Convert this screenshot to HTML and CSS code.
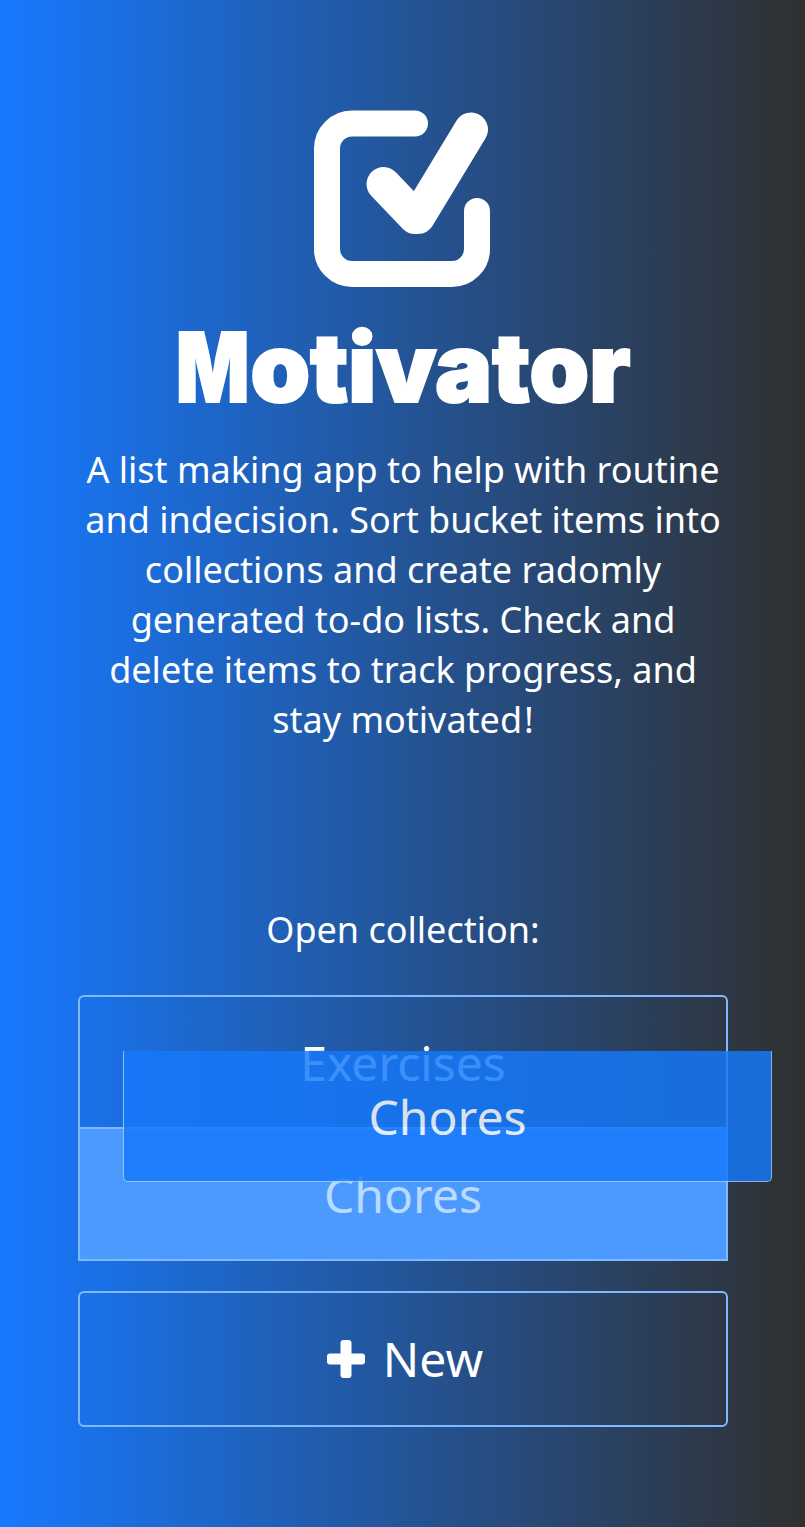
FILE: index.html
```html
<!DOCTYPE html>
<html lang="en">
<head>
<meta charset="utf-8">
<title>Motivator</title>
<link rel="stylesheet" href="styles.css">
</head>
<body>
<main class="page">
  <svg class="logo" viewBox="0 0 176 177" fill="none" stroke="currentColor" stroke-linecap="round" stroke-linejoin="round">
    <path stroke-width="26" d="M101 13.500H38A25 25 0 0 0 13 38.500V139A25 25 0 0 0 38 164H138A25 25 0 0 0 163 139V101"/>
    <path stroke-width="34" d="M69.500 74L101 107H104L157 19.500"/>
  </svg>
  <h1 class="brand"><span class="brand-cap">M</span>otivator</h1>
  <p class="intro">A list making app to help with routine<br>and indecision. Sort bucket items into<br>collections and create radomly<br>generated to-do lists. Check and<br>delete items to track progress, and<br>stay motivate<span class="loose">d</span>!</p>
  <h2 class="label">Open collection:</h2>
  <div class="collections">
    <div class="item">Exercises</div>
    <div class="item item-active">Chores</div>
    <div class="ghost">Chores</div>
  </div>
  <button class="new">
    <svg class="plus" viewBox="0 0 38 38" fill="currentColor"><rect x="13.500" width="11" height="38" rx="3"/><rect y="13.500" width="38" height="11" rx="3"/></svg>
    <span>New</span>
  </button>
</main>
</body>
</html>
```
FILE: styles.css
```css
* { box-sizing: border-box; }
body {
  margin: 0;
  color: #fff;
  font-family: "Noto Sans", sans-serif;
  background: linear-gradient(90deg, #1779ff, #303030);
}
.page {
  height: 1527px;
  padding: 110px 77px 0 78px;
  display: flex;
  flex-direction: column;
  align-items: center;
  overflow: hidden;
}
.logo { width: 176px; height: 177px; flex: none; margin-right: 2px; }
.brand {
  margin: 30px 0 0;
  font: 900 96px/100px Inter, sans-serif;
  letter-spacing: -0.3px;
  -webkit-text-stroke: 2px #fff;
  white-space: nowrap;
}
.brand-cap {
  display: inline-block;
  margin-right: -17px;
  transform: scaleX(.8);
  transform-origin: left;
}
.intro {
  margin: 28px 0 0;
  font-size: 36px;
  line-height: 50px;
  text-align: center;
  white-space: nowrap;
}
.loose { letter-spacing: 2px; }
.label {
  margin: 160px 0 0;
  font-size: 36px;
  font-weight: 400;
  line-height: 50px;
}
.collections {
  position: relative;
  width: 650px;
  margin-top: 40px;
  font-size: 48px;
}
.item {
  height: 134px;
  border: 2px solid #80b9ff;
  border-radius: 6px 6px 0 0;
  display: flex;
  align-items: center;
  justify-content: center;
}
.item-active {
  margin-top: -2px;
  border-radius: 0;
  background: #4d9aff;
  color: #b8dbff;
}
.ghost {
  position: absolute;
  left: 45px;
  top: 56px;
  width: 649px;
  height: 131px;
  border: 1px solid #a0ccff;
  border-top: 0;
  border-radius: 0 0 5px 5px;
  background: #1579fb;
  opacity: .83;
  display: flex;
  align-items: center;
  justify-content: center;
}
.new {
  width: 650px;
  height: 136px;
  margin-top: 30px;
  padding: 0 0 0 4px;
  border: 2px solid #80b9ff;
  border-radius: 6px;
  background: none;
  color: #fff;
  font: 48px "Noto Sans", sans-serif;
  display: flex;
  align-items: center;
  justify-content: center;
  gap: 18px;
}
.new span { margin-top: -2px; }
.plus { width: 38px; height: 38px; }
```
